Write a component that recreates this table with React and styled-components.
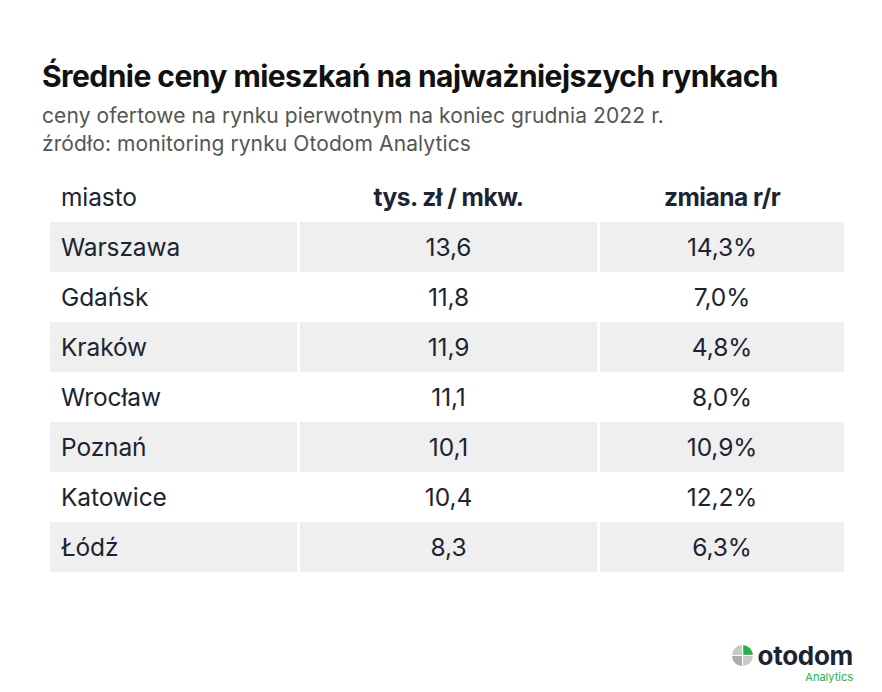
import React from "react";
import styled, { createGlobalStyle } from "styled-components";

const Global = createGlobalStyle`
  html, body { margin: 0; padding: 0; background: #fff; }
  body { font-family: Inter, "Noto Sans", sans-serif; color: #1c2433; }
`;

const Page = styled.div`
  width: 882px;
  height: 692px;
  box-sizing: border-box;
  padding: 55px 38px 0 42px;
  position: relative;
  display: flex;
  flex-direction: column;
`;

const Title = styled.h1`
  margin: 0 0 5px;
  font-size: 30px;
  font-weight: 700;
  letter-spacing: -0.55px;
  line-height: 42px;
  color: #111;
`;

const Sub = styled.p`
  margin: 0;
  font-size: 21px;
  line-height: 28px;
  color: #555;
  font-weight: 400;
  letter-spacing: 0.1px;
`;

const Table = styled.div`
  margin: 14px 0 0 8px;
  display: grid;
  grid-template-columns: 247px 297px 244px;
  column-gap: 3px;
  width: 794px;
`;

const Cell = styled.div`
  height: 50px;
  display: flex;
  align-items: center;
  justify-content: ${(p) => (p.$left ? "flex-start" : "center")};
  padding-left: ${(p) => (p.$left ? "11px" : "0")};
  background: ${(p) => (p.$shade ? "#efefef" : "#fff")};
  font-size: 24.5px;
  font-weight: ${(p) => (p.$head && !p.$left ? 700 : 400)};
  letter-spacing: ${(p) => (p.$head && !p.$left ? "-0.5px" : "-0.1px")};
  color: #1c2433;
`;

const Logo = styled.div`
  position: absolute;
  right: 29px;
  bottom: 9px;
  display: flex;
  flex-direction: column;
  align-items: flex-end;
`;

const LogoRow = styled.div`
  display: flex;
  align-items: center;
  gap: 5px;
`;

const LogoWord = styled.span`
  font-size: 26px;
  font-weight: 700;
  color: #1c2433;
  letter-spacing: -0.3px;
  line-height: 31px;
`;

const LogoSub = styled.span`
  font-size: 11px;
  color: #22b545;
  line-height: 12px;
`;

const rows = [
  ["Warszawa", "13,6", "14,3%"],
  ["Gdańsk", "11,8", "7,0%"],
  ["Kraków", "11,9", "4,8%"],
  ["Wrocław", "11,1", "8,0%"],
  ["Poznań", "10,1", "10,9%"],
  ["Katowice", "10,4", "12,2%"],
  ["Łódź", "8,3", "6,3%"],
];

export default function App() {
  return (
    <Page>
      <Global />
      <Title>Średnie ceny mieszkań na najważniejszych rynkach</Title>
      <Sub>ceny ofertowe na rynku pierwotnym na koniec grudnia 2022 r.</Sub>
      <Sub>źródło: monitoring rynku Otodom Analytics</Sub>
      <Table>
        <Cell $left $head>miasto</Cell>
        <Cell $head>tys. zł / mkw.</Cell>
        <Cell $head>zmiana r/r</Cell>
        {rows.map((r, i) => (
          <React.Fragment key={r[0]}>
            <Cell $left $shade={i % 2 === 0}>{r[0]}</Cell>
            <Cell $shade={i % 2 === 0}>{r[1]}</Cell>
            <Cell $shade={i % 2 === 0}>{r[2]}</Cell>
          </React.Fragment>
        ))}
      </Table>
      <Logo>
        <LogoRow>
          <svg width="21" height="21" viewBox="0 0 20 20">
            <circle cx="10" cy="10" r="10" fill="#c7c9cc" />
            <path d="M10 10 L10 20 A10 10 0 0 1 0 10 Z" fill="#a9acb0" />
            <path d="M10.8 0.2 A10 10 0 0 1 19.8 9.2 L10.8 9.2 Z" fill="#22b545" />
            <path d="M10 10 L10 0 M10 10 L20 10 M10 10 L10 20 M10 10 L0 10" stroke="#fff" strokeWidth="1" />
          </svg>
          <LogoWord>otodom</LogoWord>
        </LogoRow>
        <LogoSub>Analytics</LogoSub>
      </Logo>
    </Page>
  );
}
